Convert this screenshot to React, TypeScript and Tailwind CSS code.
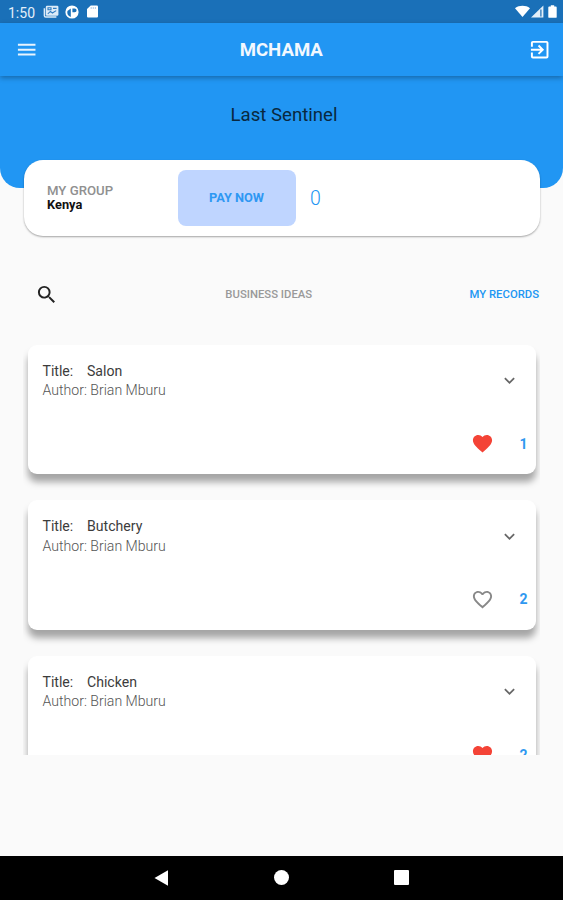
import {
  MdExitToApp,
  MdExpandMore,
  MdFavorite,
  MdFavoriteBorder,
  MdMenu,
  MdSearch,
} from "react-icons/md";

type Idea = {
  title: string;
  author: string;
  likes: number;
  liked: boolean;
};

const IDEAS: Idea[] = [
  { title: "Salon", author: "Brian Mburu", likes: 1, liked: true },
  { title: "Butchery", author: "Brian Mburu", likes: 2, liked: false },
  { title: "Chicken", author: "Brian Mburu", likes: 2, liked: true },
];

function StatusBar() {
  return (
    <div className="flex h-[23px] items-center justify-between bg-[#1a70b8] pl-[8px] pr-[6px] text-white">
      <div className="flex items-center">
        <span className="w-[35px] pt-[2px] text-[14px] leading-none text-[#e3eff9]">1:50</span>
        {/* News */}
        <svg className="h-[13px] w-[16px]" viewBox="0 0 16 13" fill="none">
          <path d="M1.4 3.2v7.5a1.4 1.4 0 0 0 1.4 1.4h10.6" stroke="#dcebf8" strokeWidth="1.5" />
          <rect x="2.8" y="0.8" width="12.6" height="10" rx="1.2" fill="#dcebf8" />
          <path d="M5 2.8h3v2H5zM10 3.4h3.6M4.8 8.8l2.6-2.4 2 1.6 3.8-2.4" stroke="#2f7cc0" strokeWidth="1.1" />
        </svg>
        <svg className="ml-[6px] h-[14px] w-[14px]" viewBox="0 0 14 14" fill="none">
          <circle cx="7" cy="7" r="6.6" fill="#fff" />
          <path d="M5.8 3.5v8.6a5.3 5.3 0 0 1-3.4-6M7.4 3.4h2.3a1.9 1.9 0 0 1 0 3.8H7.4z" fill="#1a70b8" />
        </svg>
        {/* SD card */}
        <svg className="ml-[8px] h-[13px] w-[11px]" viewBox="0 0 10 13" preserveAspectRatio="none">
          <path d="M3.4.6H9a1 1 0 0 1 1 1v9.8a1 1 0 0 1-1 1H1a1 1 0 0 1-1-1V4z" fill="#fff" />
          <path d="M3.8 2v2M5.7 2v2M7.6 2v2" stroke="#8cb8de" strokeWidth="0.7" />
        </svg>
      </div>
      <div className="flex items-center">
        <svg className="h-[13px] w-[15px]" viewBox="0 0 15 13">
          <path d="M0 3.2C4.4 0 10.6 0 15 3.2L7.5 12z" fill="#fff" />
        </svg>
        <svg className="ml-px h-[13px] w-[13px]" viewBox="0 0 13 13">
          <path d="M0 12.6L12.4.4v12.2z" fill="#e3eff9" />
          <path d="M9.9 4.6v6.8" stroke="#1a70b8" strokeWidth="1.2" />
        </svg>
        <svg className="ml-[4px] h-[14px] w-[9px]" viewBox="0 0 9 14">
          <path d="M2.8.2h3.4v1.4H7.8a.9.9 0 0 1 .9.9v9.4a.9.9 0 0 1-.9.9H1.2a.9.9 0 0 1-.9-.9V2.5a.9.9 0 0 1 .9-.9h1.6z" fill="#fff" />
        </svg>
      </div>
    </div>
  );
}

function IdeaCard({ idea }: { idea: Idea }) {
  return (
    <div className="flex h-[129.4px] shrink-0 flex-col justify-between rounded-[9px] bg-white pb-[19px] pl-[15px] pr-[8px] pt-[16px] shadow-[0_8px_7px_rgba(0,0,0,0.34)]">
      <div className="flex items-center justify-between">
        <div className="pt-px text-[14.1px] leading-[19.4px]">
          <div className="flex text-[#3c3c3c]">
            <span className="w-[44.5px]">Title:</span>
            <span>{idea.title}</span>
          </div>
          <div className="font-light text-[#555]">Author: {idea.author}</div>
        </div>
        <MdExpandMore className="mr-[8px] size-[21px] text-[#666]" />
      </div>
      <div className="flex items-center justify-end">
        {idea.liked ? (
          <MdFavorite className="size-[23px] text-[#f44336]" />
        ) : (
          <MdFavoriteBorder className="size-[23px] text-[#888]" />
        )}
        <span className="w-[34px] text-right text-[14px] font-bold leading-none text-[#2f98f0]">
          {idea.likes}
        </span>
      </div>
    </div>
  );
}

export default function App() {
  return (
    <div className="flex h-[900px] w-[563px] flex-col overflow-hidden bg-[#fafafa] font-['Roboto',sans-serif]">
      <StatusBar />

      {/* App bar */}
      <header className="relative z-10 flex h-[53px] shrink-0 items-center justify-between bg-[#2196f3] pl-[15px] pr-[11.5px] text-white shadow-[0_2px_5px_rgba(0,0,0,0.3)]">
        <MdMenu className="size-[23.4px] text-[#e8f4fe]" />
        <h1 className="pr-[4px] pt-[2px] text-[18.6px] font-bold leading-none text-[#f2f8fe]">MCHAMA</h1>
        <MdExitToApp className="size-[23.4px]" />
      </header>

      <div className="h-[112px] shrink-0 rounded-b-[20px] bg-[#2196f3] pt-[29px] text-center text-[18.6px] leading-[20px] text-[#09283f]">
        <span className="pl-[5px]">Last Sentinel</span>
      </div>

      {/* Group summary */}
      <div className="mx-[23.5px] -mt-[28px] flex h-[76px] shrink-0 items-center rounded-[19px] bg-white pl-[23.5px] shadow-[0_1px_2px_rgba(0,0,0,0.35)]">
        <div className="-mt-px w-[131px]">
          <div className="text-[13.2px] font-medium leading-[15px] text-[#909090]">MY GROUP</div>
          <div className="text-[12.8px] font-bold leading-[14px] text-[#111]">Kenya</div>
        </div>
        <button className="h-[56px] w-[118px] rounded-[8px] bg-[#bfd5ff] pr-px text-[12.8px] font-bold text-[#2e98f3]">
          PAY NOW
        </button>
        <span className="ml-[14px] pt-[2px] text-[19.5px] font-light text-[#2196f3]">0</span>
      </div>

      <div className="mt-[46px] flex h-[25px] shrink-0 items-center justify-between pl-[34.5px] pr-[24px] text-[11.3px] font-medium">
        <MdSearch className="size-[23.4px] text-[#222]" />
        <span className="pl-[10px] pt-[2px] text-[#999]">BUSINESS IDEAS</span>
        <span className="pt-[2px] text-[#2196f3]">MY RECORDS</span>
      </div>

      {/* Idea list, cut off where the scroll area ends */}
      <div className="mx-[23px] mt-[27.5px] flex h-[420.5px] shrink-0 flex-col gap-[26px] overflow-hidden px-[4.5px] pt-[10.5px]">
        {IDEAS.map((idea) => (
          <IdeaCard key={idea.title} idea={idea} />
        ))}
      </div>

      {/* Android navigation */}
      <nav className="mt-auto flex h-[44.5px] shrink-0 items-center justify-center gap-[105px] bg-black">
        <svg className="h-[16px] w-[15px]" viewBox="0 0 15 16">
          <path d="M0.5 8L14 .3v15.4z" fill="#fff" />
        </svg>
        <div className="size-[15px] rounded-full bg-white" />
        <div className="size-[15px] rounded-[1px] bg-white" />
      </nav>
    </div>
  );
}
